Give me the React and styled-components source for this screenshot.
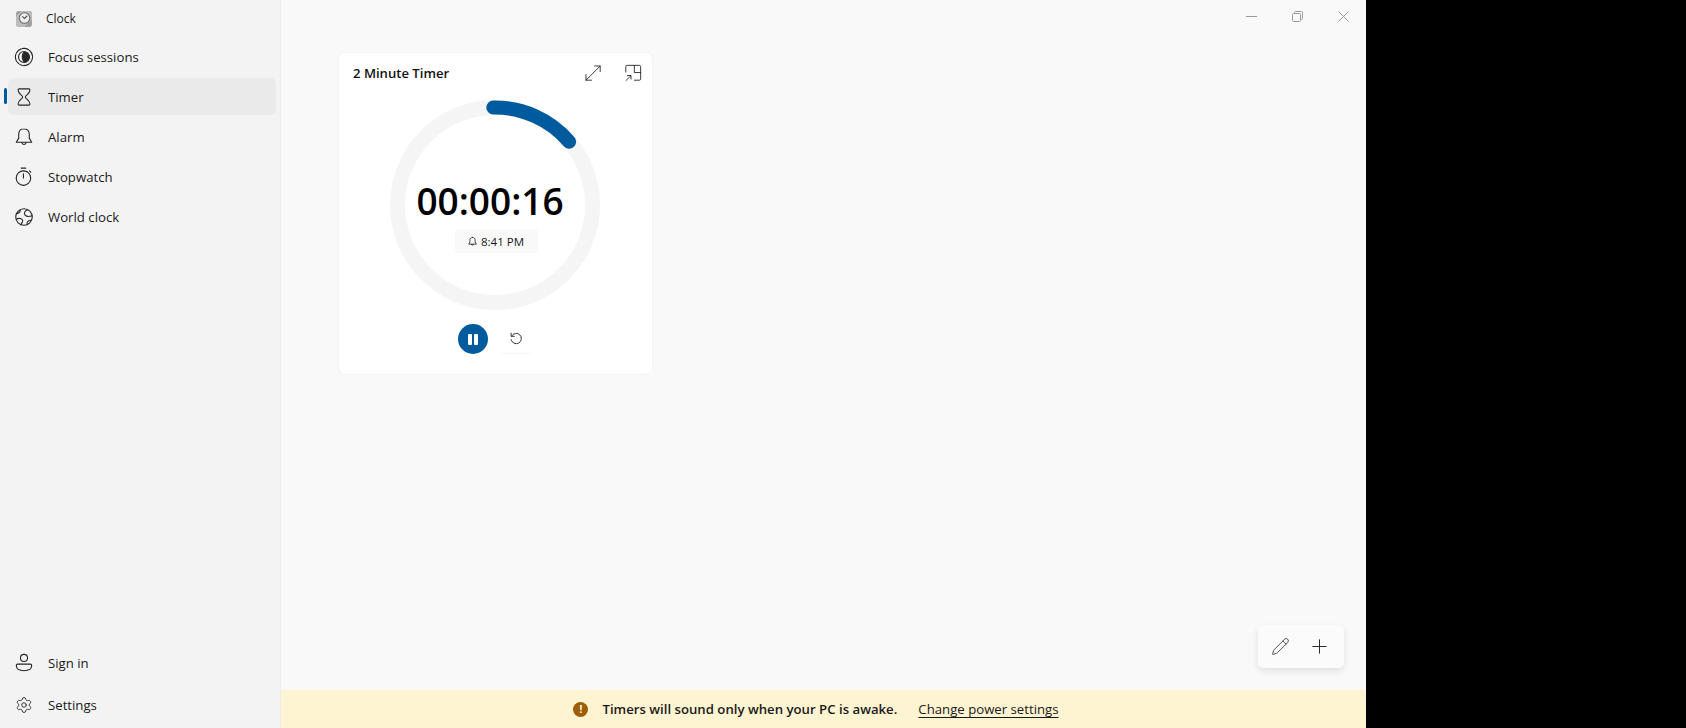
import React from "react";
import styled, { createGlobalStyle } from "styled-components";
import { Settings, Pencil } from "lucide-react";

const GlobalStyle = createGlobalStyle`
    html, body {
        margin: 0;
        padding: 0;
        height: 100%;
        background: #000;
        overflow: hidden;
    }
    body {
        font-family: "Open Sans", "Noto Sans", "Liberation Sans", sans-serif;
        color: #1a1a1a;
    }
`;

const Window = styled.div`
    width: 1366px;
    height: 728px;
    display: flex;
    background: #f9f9f9;
`;

//left nav
const Sidebar = styled.aside`
    width: 280px;
    flex-shrink: 0;
    display: flex;
    flex-direction: column;
    background: #f3f3f3;
    border-right: 1px solid #ededed;
`;

const AppTitle = styled.div`
    height: 37px;
    display: flex;
    align-items: center;
    gap: 13px;
    padding-left: 15px;
    font-size: 12px;
`;

const NavList = styled.nav`
    display: flex;
    flex-direction: column;
    gap: 3px;
    padding: 1px 4px 0 8px;
`;

const FooterList = styled(NavList)`
    margin-top: auto;
    gap: 5px;
    padding-top: 0;
    padding-bottom: 5px;
`;

const NavItem = styled.div`
    height: 37px;
    display: flex;
    align-items: center;
    gap: 13px;
    padding-left: 5px;
    font-size: 13.2px;
    border-radius: 6px;
    position: relative;
    background: ${(p) => (p.$active ? "#eaeaea" : "transparent")};
    svg {
        flex-shrink: 0;
    }
`;

const NavIndicator = styled.span`
    position: absolute;
    left: -4px;
    top: 10px;
    width: 3px;
    height: 16px;
    border-radius: 2px;
    background: #005a9e;
`;

const GearIcon = styled(Settings)`
    margin: 0 2px;
`;

const Main = styled.main`
    flex: 1;
    min-width: 0;
    display: flex;
    flex-direction: column;
`;

const Caption = styled.div`
    height: 32px;
    display: flex;
    justify-content: flex-end;
    flex-shrink: 0;
`;

const CaptionButton = styled.div`
    width: 46px;
    display: flex;
    align-items: center;
    justify-content: center;
`;

const Content = styled.div`
    flex: 1;
    min-height: 0;
    display: flex;
    flex-direction: column;
    padding: 20px 22px 22px 57px;
`;

const Card = styled.section`
    width: 315px;
    height: 323px;
    box-sizing: border-box;
    background: #fff;
    border: 1px solid #f4f4f4;
    border-radius: 7px;
    display: flex;
    flex-direction: column;
    align-items: center;
`;

const CardHeader = styled.header`
    align-self: stretch;
    height: 40px;
    display: flex;
    align-items: center;
    padding: 0 10px 0 14px;
`;

const CardTitle = styled.h2`
    flex: 1;
    margin: 0;
    font-size: 13.1px;
    font-weight: 600;
    color: #111;
`;

const CardIcons = styled.div`
    display: flex;
    gap: 22px;
`;

const Dial = styled.div`
    width: 210px;
    height: 210px;
    margin-top: 7px;
    margin-left: -2px;
    position: relative;
    flex-shrink: 0;
`;

const DialCenter = styled.div`
    position: absolute;
    inset: 0;
    display: flex;
    flex-direction: column;
    align-items: center;
    justify-content: center;
`;

const TimeText = styled.div`
    font-size: 37px;
    font-weight: 600;
    line-height: 54px;
    color: #000;
    margin-right: 9px;
    margin-top: 17px;
`;

const EndPill = styled.div`
    height: 24px;
    padding: 0 14px 0 12px;
    margin-top: 1px;
    margin-left: 4px;
    display: flex;
    align-items: center;
    gap: 3px;
    font-size: 11.5px;
    background: #f9f9f9;
    border-radius: 4px;
`;

const Controls = styled.div`
    display: flex;
    align-items: center;
    gap: 13px;
    margin-top: 14px;
    margin-right: 2px;
`;

const PauseButton = styled.div`
    width: 30px;
    height: 30px;
    border-radius: 50%;
    background: #005a9e;
    display: flex;
    align-items: center;
    justify-content: center;
    gap: 2px;
`;

const PauseBar = styled.span`
    width: 4px;
    height: 11px;
    background: #fff;
    border-radius: 1px;
`;

const ResetButton = styled.div`
    width: 30px;
    height: 30px;
    display: flex;
    align-items: center;
    justify-content: center;
    border-bottom: 1px solid #f6f6f6;
    box-sizing: border-box;
`;

const Toolbar = styled.div`
    margin-top: auto;
    align-self: flex-end;
    width: 86px;
    height: 43px;
    box-sizing: border-box;
    padding-right: 4px;
    display: flex;
    align-items: center;
    justify-content: center;
    gap: 22px;
    background: #fbfbfb;
    border-radius: 5px;
    box-shadow: 0 3px 7px rgba(0, 0, 0, 0.1);
`;

const Banner = styled.div`
    height: 38px;
    flex-shrink: 0;
    background: #fff4d1;
    display: flex;
    align-items: center;
    justify-content: center;
    padding-right: 15px;
    font-size: 13.2px;
`;

const WarnDot = styled.span`
    width: 15px;
    height: 15px;
    border-radius: 50%;
    background: #9d5d00;
    color: #fff;
    font-size: 10px;
    font-weight: 700;
    display: flex;
    align-items: center;
    justify-content: center;
`;

const BannerText = styled.span`
    font-weight: 600;
    margin-left: 14px;
`;

const BannerLink = styled.a`
    margin-left: 21px;
    color: #1a1a1a;
    text-decoration: underline;
    text-underline-offset: 3px;
`;

//icons
const Icon = ({ size = 20, children }) => (
    <svg width={size} height={size} viewBox="0 0 20 20" fill="none" stroke="#262626" strokeWidth="1" strokeLinecap="round" strokeLinejoin="round">
        {children}
    </svg>
);

const ClockLogo = () => (
    <svg width="18" height="18" viewBox="0 0 17 17">
        <rect x="1" y="1" width="15" height="15" rx="2.5" fill="#9f9f9f" />
        <path d="M1 6 L6 1 H13.5 a2.5 2.5 0 0 1 2.5 2.5 V9 L9 16 H3.5 A2.5 2.5 0 0 1 1 13.5 Z" fill="#bdbdbd" />
        <circle cx="9" cy="7.6" r="5" fill="#efefef" stroke="#666" strokeWidth="1" />
        <path d="M6.8 6 L9 8 L11.6 5.4" fill="none" stroke="#555" strokeWidth="1.1" />
    </svg>
);

const FocusIcon = () => (
    <Icon size={22}>
        <circle cx="10" cy="10" r="7.8" strokeDasharray="6 1" />
        <circle cx="10" cy="10" r="5" />
        <path d="M10 5 C7 7.5 7.5 12.5 10 15 A5 5 0 0 0 10 5 Z" fill="#262626" stroke="none" />
    </Icon>
);

const HourglassIcon = () => (
    <Icon size={22}>
        <path d="M4.6 3.6 C4.6 2.9 5 2.6 5.6 2.6 H14.4 C15 2.6 15.4 2.9 15.4 3.6 C15.4 7 11.2 8.4 11.2 10 C11.2 11.6 15.4 13 15.4 16.4 C15.4 17.1 15 17.4 14.4 17.4 H5.6 C5 17.4 4.6 17.1 4.6 16.4 C4.6 13 8.8 11.6 8.8 10 C8.8 8.4 4.6 7 4.6 3.6 Z" />
    </Icon>
);

const BellIcon = ({ size = 22, width = 1 }) => (
    <Icon size={size}>
        <path d="M10 2.5 C6.8 2.5 5.2 4.9 5.2 7.6 V11 L3 14.8 H17 L14.8 11 V7.6 C14.8 4.9 13.2 2.5 10 2.5 Z" strokeWidth={width} />
        <path d="M8 15 C8.2 17.4 11.8 17.4 12 15" strokeWidth={width} />
    </Icon>
);

const StopwatchIcon = () => (
    <Icon size={22}>
        <circle cx="9.5" cy="11" r="6.6" />
        <path d="M7.4 1.9 H11.6 M9.5 7 V11 M15 4.4 L16.2 5.6" />
    </Icon>
);

const GlobeIcon = () => (
    <Icon size={22}>
        <circle cx="10" cy="10" r="7.5" />
        <path d="M6.5 3.5 C7 6 5 6.5 3.3 7 M13.5 3.4 C10.8 4.2 9.5 6.5 11 8.3 C12.8 10.4 15.5 9.4 17.4 9 M3 12 C5.5 10.5 8.5 11.5 8.8 13.5 C9 15 7.5 15.5 7.3 17 M13 16.8 C12.4 14.8 13.2 13.4 16 13" />
    </Icon>
);

const PersonIcon = () => (
    <Icon size={22}>
        <circle cx="10" cy="5.4" r="3.2" />
        <path d="M4.2 11 H15.8 C16.6 11 17 11.6 17 12.3 C17 15.7 13.8 17 10 17 C6.2 17 3 15.7 3 12.3 C3 11.6 3.4 11 4.2 11 Z" />
    </Icon>
);

const ExpandIcon = () => (
    <Icon size={18}>
        <path d="M11.8 2.2 H18 V8.4 M18 2.2 L2.2 18 M2.2 11.8 V18 H8.4" />
    </Icon>
);

const MiniModeIcon = () => (
    <Icon size={18}>
        <path d="M2 9 V3 A1.5 1.5 0 0 1 3.5 1.5 H17 A1.5 1.5 0 0 1 18.5 3 V16.5 A1.5 1.5 0 0 1 17 18 H11.5 M11.5 1.5 V9.5 H18.5" />
        <path d="M2.2 18.4 L7.6 13 M3.8 12.8 H7.8 V16.8" />
    </Icon>
);

const ResetIcon = () => (
    <Icon size={14}>
        <path d="M3.8 5.6 A7.4 7.4 0 1 1 3 11" strokeWidth="1.3" />
        <path d="M3 1.6 V6.2 H7.6" strokeWidth="1.3" />
    </Icon>
);

const PlusIcon = () => (
    <Icon size={15}>
        <path d="M10 1 V19 M1 10 H19" strokeWidth="1.3" />
    </Icon>
);

const Ring = () => {
    const r = 97.5;
    const c = 2 * Math.PI * r;
    return (
        <svg width="210" height="210" viewBox="0 0 210 210">
            <circle cx="105" cy="105" r={r} fill="none" stroke="#f5f5f6" strokeWidth="15" />
            <circle
                cx="105"
                cy="105"
                r={r}
                fill="none"
                stroke="#005a9e"
                strokeWidth="14"
                strokeLinecap="round"
                strokeDasharray={`${c * 0.14} ${c}`}
                transform="rotate(-91 105 105)"
            />
        </svg>
    );
};

const navItems = [
    { label: "Focus sessions", icon: <FocusIcon /> },
    { label: "Timer", icon: <HourglassIcon />, active: true },
    { label: "Alarm", icon: <BellIcon /> },
    { label: "Stopwatch", icon: <StopwatchIcon /> },
    { label: "World clock", icon: <GlobeIcon /> },
];

export default function App() {
    return (
        <React.Fragment>
            <GlobalStyle />
            <Window>
                <Sidebar>
                    <AppTitle>
                        <ClockLogo />
                        Clock
                    </AppTitle>
                    <NavList>
                        {navItems.map((item) => (
                            <NavItem key={item.label} $active={item.active}>
                                {item.active && <NavIndicator />}
                                {item.icon}
                                {item.label}
                            </NavItem>
                        ))}
                    </NavList>
                    <FooterList>
                        <NavItem>
                            <PersonIcon />
                            Sign in
                        </NavItem>
                        <NavItem>
                            <GearIcon size={18} strokeWidth={1.2} color="#262626" />
                            Settings
                        </NavItem>
                    </FooterList>
                </Sidebar>
                <Main>
                    <Caption>
                        <CaptionButton>
                            <svg width="11" height="11" viewBox="0 0 11 11" fill="none" stroke="#9a9a9a">
                                <path d="M0 5.5 H11" />
                            </svg>
                        </CaptionButton>
                        <CaptionButton>
                            <svg width="11" height="11" viewBox="0 0 11 11" fill="none" stroke="#9a9a9a">
                                <rect x="0.5" y="2.5" width="8" height="8" rx="1" />
                                <path d="M2.5 2.5 V1.5 a1 1 0 0 1 1 -1 H9.5 a1 1 0 0 1 1 1 V7.5 a1 1 0 0 1 -1 1 H8.5" />
                            </svg>
                        </CaptionButton>
                        <CaptionButton>
                            <svg width="11" height="11" viewBox="0 0 11 11" fill="none" stroke="#9a9a9a">
                                <path d="M0.5 0.5 L10.5 10.5 M10.5 0.5 L0.5 10.5" />
                            </svg>
                        </CaptionButton>
                    </Caption>
                    <Content>
                        <Card>
                            <CardHeader>
                                <CardTitle>2 Minute Timer</CardTitle>
                                <CardIcons>
                                    <ExpandIcon />
                                    <MiniModeIcon />
                                </CardIcons>
                            </CardHeader>
                            <Dial>
                                <Ring />
                                <DialCenter>
                                    <TimeText>00:00:16</TimeText>
                                    <EndPill>
                                        <BellIcon size={11} width={1.5} />
                                        8:41 PM
                                    </EndPill>
                                </DialCenter>
                            </Dial>
                            <Controls>
                                <PauseButton>
                                    <PauseBar />
                                    <PauseBar />
                                </PauseButton>
                                <ResetButton>
                                    <ResetIcon />
                                </ResetButton>
                            </Controls>
                        </Card>
                        <Toolbar>
                            <Pencil size={19} strokeWidth={1} color="#262626" />
                            <PlusIcon />
                        </Toolbar>
                    </Content>
                    <Banner>
                        <WarnDot>!</WarnDot>
                        <BannerText>Timers will sound only when your PC is awake.</BannerText>
                        <BannerLink>Change power settings</BannerLink>
                    </Banner>
                </Main>
            </Window>
        </React.Fragment>
    );
}
